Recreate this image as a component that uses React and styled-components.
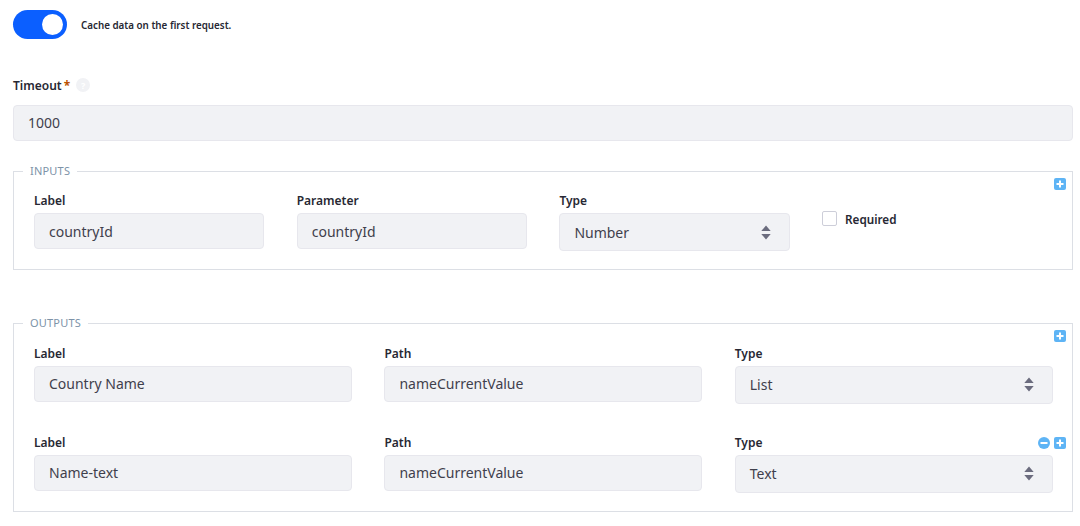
import styled, { createGlobalStyle } from 'styled-components';

const GlobalStyle = createGlobalStyle`
  html, body {
    margin: 0;
    background: #fff;
    font-family: "Noto Sans", "Open Sans", sans-serif;
    color: #272833;
  }
`;

const Page = styled.div`
  width: 1080px;
  height: 526px;
  box-sizing: border-box;
  padding: 10px 7px 0 13px;
  overflow: hidden;
`;

const ToggleRow = styled.div`
  display: flex;
  align-items: center;
  gap: 14px;
  height: 29px;
  margin-bottom: 36px;
`;

const ToggleTrack = styled.div`
  width: 54px;
  height: 29px;
  border-radius: 15px;
  background: #0b5fff;
  display: flex;
  align-items: center;
  justify-content: flex-end;
  padding-right: 4px;
  box-sizing: border-box;
`;

const ToggleKnob = styled.div`
  width: 21px;
  height: 21px;
  border-radius: 50%;
  background: #fff;
`;

const ToggleText = styled.span`
  padding-top: 2px;
  font-size: 9.8px;
  font-weight: 600;
  color: #272833;
`;

const FieldLabel = styled.div`
  display: flex;
  align-items: center;
  height: 20px;
  font-size: 12px;
  font-weight: 600;
  color: #272833;
  margin-bottom: 3px;
`;

const TimeoutLabel = styled(FieldLabel)`
  margin-bottom: 10px;
`;

const Star = styled.span`
  color: #b95000;
  margin-left: 2px;
  font-size: 12px;
  font-weight: 700;
`;

const HelpDot = styled.span`
  width: 14px;
  height: 14px;
  border-radius: 50%;
  background: #f1f2f5;
  color: #fff;
  font-size: 9px;
  font-weight: 700;
  margin-left: 6px;
  display: inline-flex;
  align-items: center;
  justify-content: center;
`;

const Input = styled.div`
  box-sizing: border-box;
  height: 36px;
  background: #f1f2f5;
  border: 1px solid #e7e7ed;
  border-radius: 4px;
  padding: 0 14px 2px;
  display: flex;
  align-items: center;
  font-size: 14px;
  color: #3f404c;
`;

const Select = styled(Input)`
  height: 38px;
  padding: 0 18px 2px 14px;
  justify-content: space-between;
`;

const Group = styled.fieldset`
  position: relative;
  margin: 0;
  box-sizing: border-box;
  border: 1px solid #dcdfe5;
  padding: 11px 19px 0 20px;
  min-width: 0;
  height: ${({ $height }) => $height}px;
`;

const TimeoutField = styled.div`
  margin-bottom: 22px;
`;

const OutputsGroup = styled(Group)`
  margin-top: 45px;
  padding-top: 12px;
`;

const Legend = styled.legend`
  margin-left: -11px;
  padding: 0 7px;
  font-size: 11px;
  line-height: 16px;
  letter-spacing: 0.2px;
  color: #7d93a8;
`;

const InputsRow = styled.div`
  display: grid;
  grid-template-columns: 230.4px 230.4px 230.4px 1fr;
  column-gap: 32.3px;

  ${Input} {
    padding-bottom: 0;
  }
`;

const OutputsRow = styled.div`
  display: grid;
  grid-template-columns: repeat(3, 318px);
  column-gap: 32.4px;
  margin-bottom: 28px;
`;

const RequiredCell = styled.label`
  display: flex;
  align-items: center;
  gap: 8px;
  height: 15px;
  margin-top: 21px;
  font-size: 11.7px;
  font-weight: 600;
`;

const RequiredText = styled.span`
  padding-top: 1px;
`;

const Checkbox = styled.span`
  box-sizing: border-box;
  width: 15px;
  height: 15px;
  background: #fff;
  border: 1px solid #cdced9;
  border-radius: 2px;
`;

const Actions = styled.div`
  position: absolute;
  right: 6px;
  display: flex;
  gap: 4px;
  top: ${({ $top }) => $top}px;
`;

function Stepper() {
  return (
    <svg width="10" height="15" viewBox="0 0 10 15">
      <path d="M5 .5 9.7 6H.3z M.3 9h9.4L5 14.5z" fill="#6b6c7e" />
    </svg>
  );
}

function PlusIcon() {
  return (
    <svg width="12" height="12" viewBox="0 0 12 12">
      <rect width="12" height="12" rx="2" fill="#5eb4f5" />
      <path d="M6 2.5v7M2.5 6h7" stroke="#fff" strokeWidth="2" />
    </svg>
  );
}

function MinusIcon() {
  return (
    <svg width="12" height="12" viewBox="0 0 12 12">
      <circle cx="6" cy="6" r="6" fill="#5eb4f5" />
      <path d="M2.5 6h7" stroke="#fff" strokeWidth="2" />
    </svg>
  );
}

function Field({ label, value }) {
  return (
    <div>
      <FieldLabel>{label}</FieldLabel>
      <Input>{value}</Input>
    </div>
  );
}

function SelectField({ label, value }) {
  return (
    <div>
      <FieldLabel>{label}</FieldLabel>
      <Select>
        {value}
        <Stepper />
      </Select>
    </div>
  );
}

export default function App() {
  return (
    <Page>
      <GlobalStyle />
      <ToggleRow>
        <ToggleTrack>
          <ToggleKnob />
        </ToggleTrack>
        <ToggleText>Cache data on the first request.</ToggleText>
      </ToggleRow>

      <TimeoutField>
        <TimeoutLabel>
          Timeout<Star>*</Star>
          <HelpDot>?</HelpDot>
        </TimeoutLabel>
        <Input>1000</Input>
      </TimeoutField>

      <Group $height={107}>
        <Legend>INPUTS</Legend>
        <Actions $top={-1}>
          <PlusIcon />
        </Actions>
        <InputsRow>
          <Field label="Label" value="countryId" />
          <Field label="Parameter" value="countryId" />
          <SelectField label="Type" value="Number" />
          <RequiredCell>
            <Checkbox />
            <RequiredText>Required</RequiredText>
          </RequiredCell>
        </InputsRow>
      </Group>

      <OutputsGroup $height={197}>
        <Legend>OUTPUTS</Legend>
        <Actions $top={-1}>
          <PlusIcon />
        </Actions>
        <OutputsRow>
          <Field label="Label" value="Country Name" />
          <Field label="Path" value="nameCurrentValue" />
          <SelectField label="Type" value="List" />
        </OutputsRow>
        <Actions $top={106}>
          <MinusIcon />
          <PlusIcon />
        </Actions>
        <OutputsRow>
          <Field label="Label" value="Name-text" />
          <Field label="Path" value="nameCurrentValue" />
          <SelectField label="Type" value="Text" />
        </OutputsRow>
      </OutputsGroup>
    </Page>
  );
}
